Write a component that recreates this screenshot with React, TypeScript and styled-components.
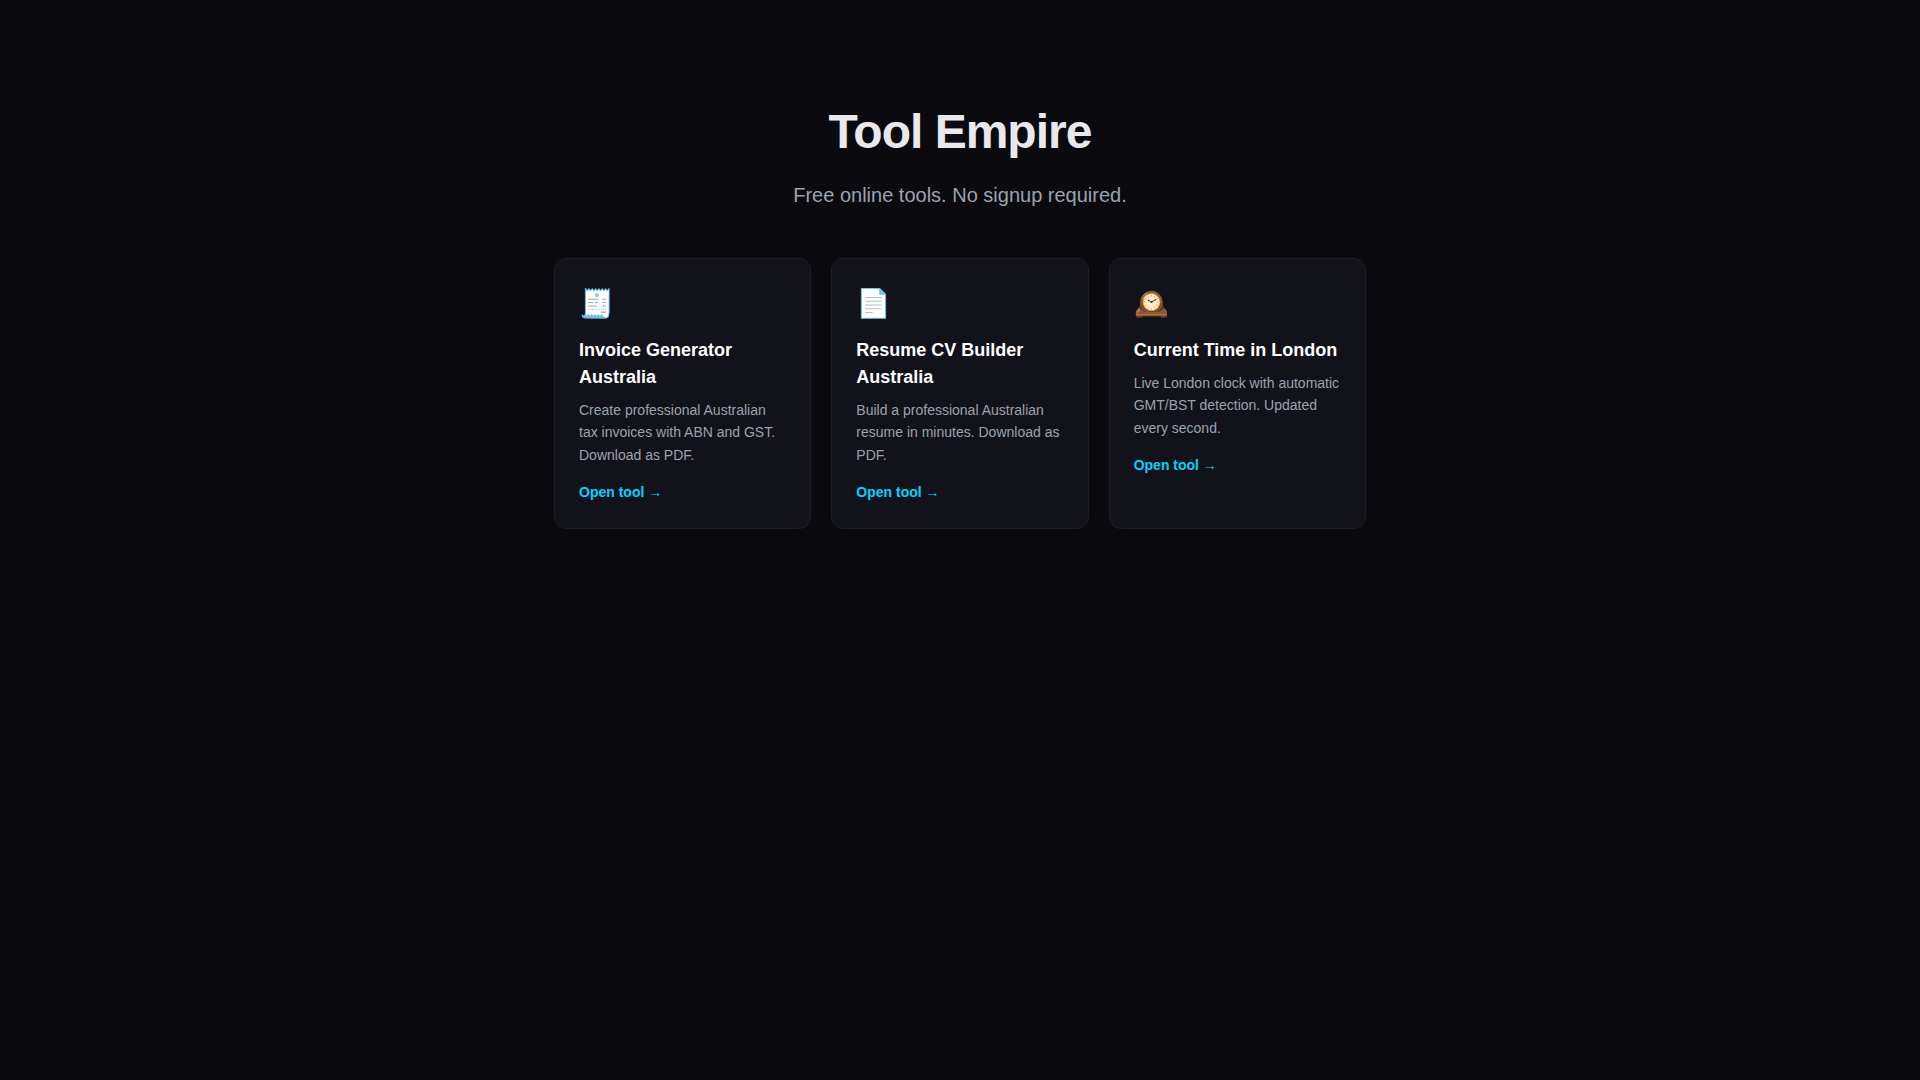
import React from "react";
import styled, { createGlobalStyle } from "styled-components";

const GlobalStyle = createGlobalStyle`
  * { box-sizing: border-box; margin: 0; padding: 0; }
  body { background: #0a0a0f; color: #e8e8ed; font-family: "Liberation Sans", Arial, sans-serif; line-height: 1.5; }
`;

const Page = styled.main`
  max-width: 860px;
  margin: 0 auto;
  padding: 96px 24px 48px;
`;

const Header = styled.header`
  text-align: center;
  margin-bottom: 48px;
`;

const Title = styled.h1`
  font-size: 48px;
  font-weight: 700;
  letter-spacing: -1px;
  margin-bottom: 12px;
`;

const Tagline = styled.p`
  font-size: 20px;
  color: #9ca3af;
`;

const ToolGrid = styled.div`
  display: grid;
  grid-template-columns: repeat(auto-fit, minmax(240px, 1fr));
  gap: 20px;
`;

const ToolCard = styled.a`
  padding: 24px;
  background: #12121a;
  border: 1px solid #1e1e2a;
  border-radius: 12px;
  color: inherit;
  text-decoration: none;
`;

const ToolIcon = styled.div`
  font-size: 28px;
  margin-bottom: 12px;
`;

const ToolName = styled.h2`
  font-size: 18px;
  color: #fff;
  margin-bottom: 8px;
`;

const ToolText = styled.p`
  font-size: 14px;
  line-height: 1.6;
  color: #9ca3af;
  margin-bottom: 14px;
`;

const OpenLabel = styled.span`
  font-size: 14px;
  font-weight: 700;
  color: #00d4ff;
`;

const tools = [
  { icon: "🧾", name: "Invoice Generator Australia", text: "Create professional Australian tax invoices with ABN and GST. Download as PDF.", href: "#invoice" },
  { icon: "📄", name: "Resume CV Builder Australia", text: "Build a professional Australian resume in minutes. Download as PDF.", href: "#resume" },
  { icon: "🕰️", name: "Current Time in London", text: "Live London clock with automatic GMT/BST detection. Updated every second.", href: "#london" },
];

export default function App() {
  return (
    <>
      <GlobalStyle />
      <Page>
        <Header>
          <Title>Tool Empire</Title>
          <Tagline>Free online tools. No signup required.</Tagline>
        </Header>
        <ToolGrid>
          {tools.map((tool) => (
            <ToolCard key={tool.name} href={tool.href}>
              <ToolIcon aria-hidden="true">{tool.icon}</ToolIcon>
              <ToolName>{tool.name}</ToolName>
              <ToolText>{tool.text}</ToolText>
              <OpenLabel>Open tool →</OpenLabel>
            </ToolCard>
          ))}
        </ToolGrid>
      </Page>
    </>
  );
}
